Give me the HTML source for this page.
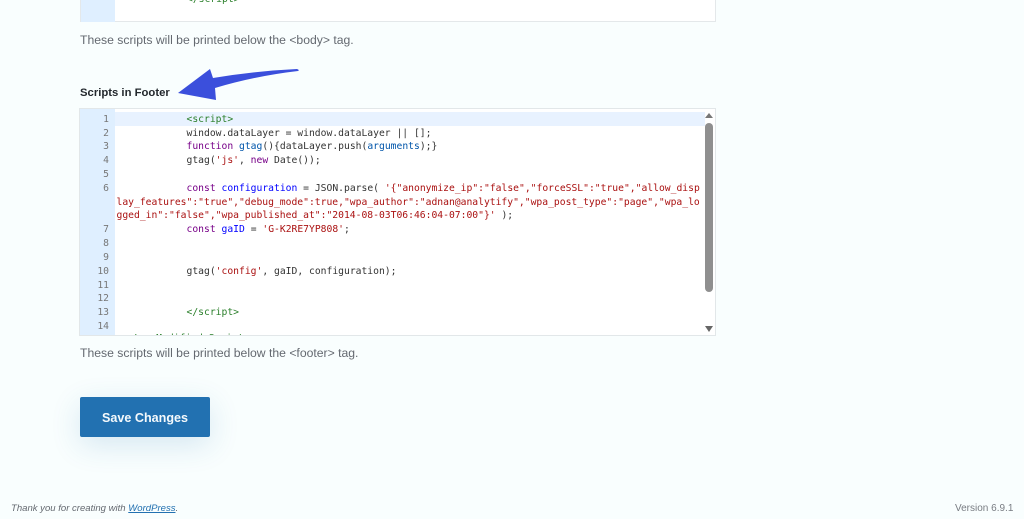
<!DOCTYPE html>
<html><head><meta charset="utf-8"><style>
html,body{margin:0;padding:0;width:1024px;height:519px;overflow:hidden;background:#f9fefe}
body{position:relative;font-family:"Liberation Sans",sans-serif}
.a{position:absolute;white-space:pre}
.d{font-size:12.2px;color:#646970;line-height:14px}
.c{font:9.7px/13.7px "DejaVu Sans Mono","Liberation Mono",monospace;color:#333;height:14px;margin-top:1px}
.n{left:80px;width:29px;text-align:right;color:#777}
.t{left:116.5px}
.g{color:#2a7f2a}.r{color:#a11}.b{color:#05a}.p{color:#708}.bb{color:#00f}
</style></head><body>
<div class="a" style="left:80px;top:-2px;width:634px;height:23px;background:#fff;border:1px solid #e4e8ea;border-top:0"></div>
<div class="a" style="left:81px;top:0;width:34px;height:22px;background:#dfefff"></div>
<div class="a c g" style="left:187px;top:-8px">&lt;/script&gt;</div>
<div class="a d" style="left:80px;top:33px">These scripts will be printed below the &lt;body&gt; tag.</div>
<div class="a" style="left:80px;top:86px;font-size:11.3px;font-weight:bold;color:#23282d;line-height:14px">Scripts in Footer</div>
<svg class="a" style="left:170px;top:66px" width="135" height="38" viewBox="170 66 135 38"><path d="M178 93 L210 69 L213 78 Q255 71 297 69 Q300 70 298 71 Q255 76 215 88 L216 100 Z" fill="#3b4fdc"/></svg>
<div class="a" style="left:79px;top:108px;width:635px;height:226px;background:#fff;border:1px solid #e2e7e9;overflow:hidden;box-sizing:content-box">
<div class="a" style="left:0;top:0;width:35px;height:226px;background:#dfefff"></div>
<div class="a" style="left:35px;top:3px;width:590px;height:14px;background:#e8f2ff"></div>
<div class="a c g" style="left:47px;top:222px">&lt;!-- Modified Script</div>
</div>
<div class="a c n" style="top:112px">1</div><div class="a c t" style="top:112px">            <span class="g">&lt;script&gt;</span></div>
<div class="a c n" style="top:126px">2</div><div class="a c t" style="top:126px">            window.dataLayer = window.dataLayer || [];</div>
<div class="a c n" style="top:139px">3</div><div class="a c t" style="top:139px">            <span class="p">function</span> <span class="b">gtag</span>(){dataLayer.push(<span class="b">arguments</span>);}</div>
<div class="a c n" style="top:153px">4</div><div class="a c t" style="top:153px">            gtag(<span class="r">'js'</span>, <span class="p">new</span> Date());</div>
<div class="a c n" style="top:167px">5</div>
<div class="a c n" style="top:181px">6</div><div class="a c t" style="top:181px">            <span class="p">const</span> <span class="bb">configuration</span> = JSON.parse( <span class="r">'{"anonymize_ip":"false","forceSSL":"true","allow_disp</span></div>
<div class="a c t r" style="top:195px">lay_features":"true","debug_mode":true,"wpa_author":"adnan@analytify","wpa_post_type":"page","wpa_lo</div>
<div class="a c t" style="top:208px"><span class="r">gged_in":"false","wpa_published_at":"2014-08-03T06:46:04-07:00"}'</span> );</div>
<div class="a c n" style="top:222px">7</div><div class="a c t" style="top:222px">            <span class="p">const</span> <span class="bb">gaID</span> = <span class="r">'G-K2RE7YP808'</span>;</div>
<div class="a c n" style="top:236px">8</div>
<div class="a c n" style="top:250px">9</div>
<div class="a c n" style="top:264px">10</div><div class="a c t" style="top:264px">            gtag(<span class="r">'config'</span>, gaID, configuration);</div>
<div class="a c n" style="top:278px">11</div>
<div class="a c n" style="top:291px">12</div>
<div class="a c n" style="top:305px">13</div><div class="a c t" style="top:305px">            <span class="g">&lt;/script&gt;</span></div>
<div class="a c n" style="top:319px">14</div>
<div class="a" style="left:705px;top:123px;width:8px;height:169px;background:#8f8f8f;border-radius:4px"></div>
<svg class="a" style="left:704px;top:112px" width="10" height="8"><path d="M1 6H9L5 1Z" fill="#777"/></svg>
<svg class="a" style="left:704px;top:325px" width="10" height="8"><path d="M1 1H9L5 7Z" fill="#666"/></svg>
<div class="a d" style="left:80px;top:346px">These scripts will be printed below the &lt;footer&gt; tag.</div>
<div class="a" style="left:80px;top:397px;width:130px;height:40px;background:#2271b1;border-radius:2px;box-shadow:0 8px 30px rgba(34,113,177,.16);color:#f4f9fc;font-size:12.6px;font-weight:bold;line-height:42px;text-align:center">Save Changes</div>
<div class="a" style="left:11px;top:502px;font-size:9.55px;font-style:italic;color:#646970;line-height:13px">Thank you for creating with <span style="color:#2271b1;text-decoration:underline">WordPress</span>.</div>
<div class="a" style="left:955px;top:502px;font-size:10px;color:#787c82;line-height:13px">Version 6.9.1</div>
</body></html>
